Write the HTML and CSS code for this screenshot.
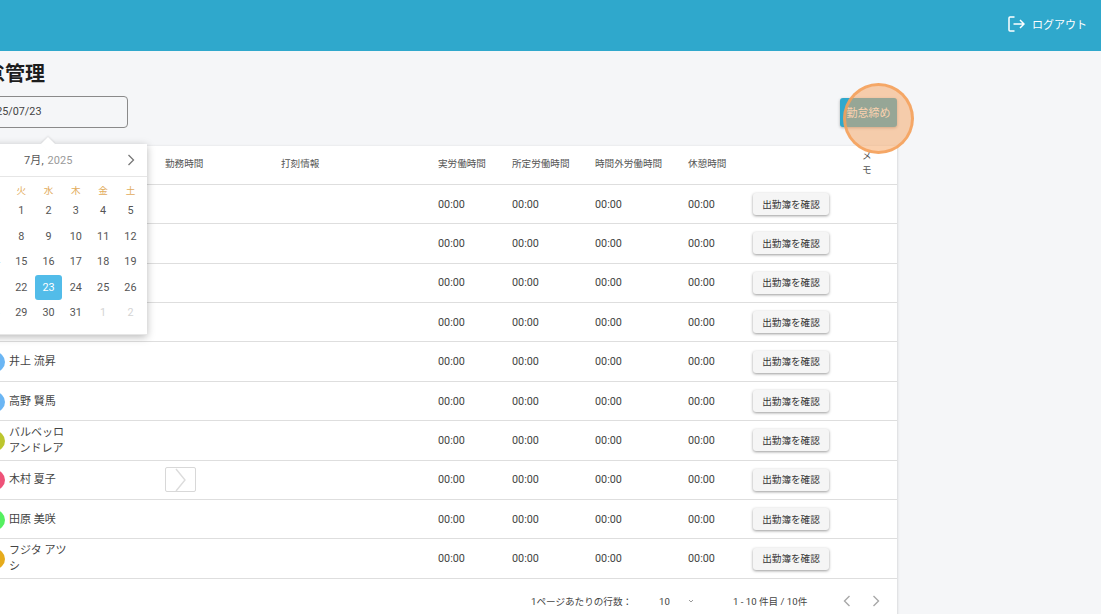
FILE: index.html
```html
<!DOCTYPE html>
<html lang="ja">
<head>
<meta charset="utf-8">
<title>勤怠管理</title>
<link rel="stylesheet" href="styles.css">
</head>
<body>
<header class="topbar">
  <a class="logout">
    <svg class="logout-icon" width="17" height="16" viewBox="0 0 17 16" fill="none" stroke="#fff" stroke-width="1.5"><path d="M6.5 1H2a1 1 0 0 0-1 1v12a1 1 0 0 0 1 1h4.5"/><path d="M5.5 8H16M12 4l4 4-4 4"/></svg>
    <span>ログアウト</span>
  </a>
</header>
<main class="page">
  <h1 class="title">勤怠管理</h1>
  <div class="toolbar">
    <div class="date-input">2025/07/23</div>
    <button class="close-btn">勤怠締め</button>
  </div>
  <div class="table">
    <div class="row head">
      <div class="cell"></div><div class="cell">勤務時間</div><div class="cell">打刻情報</div><div class="cell">実労働時間</div><div class="cell">所定労働時間</div><div class="cell">時間外労働時間</div><div class="cell">休憩時間</div><div class="cell"></div><div class="cell memo">メモ</div>
    </div>
    <div class="row"><div class="cell name"></div><div class="cell"></div><div class="cell"></div><div class="cell">00:00</div><div class="cell">00:00</div><div class="cell">00:00</div><div class="cell">00:00</div><div class="cell"><button class="ledger">出勤簿を確認</button></div><div class="cell"></div></div>
    <div class="row"><div class="cell name"></div><div class="cell"></div><div class="cell"></div><div class="cell">00:00</div><div class="cell">00:00</div><div class="cell">00:00</div><div class="cell">00:00</div><div class="cell"><button class="ledger">出勤簿を確認</button></div><div class="cell"></div></div>
    <div class="row"><div class="cell name"></div><div class="cell"></div><div class="cell"></div><div class="cell">00:00</div><div class="cell">00:00</div><div class="cell">00:00</div><div class="cell">00:00</div><div class="cell"><button class="ledger">出勤簿を確認</button></div><div class="cell"></div></div>
    <div class="row"><div class="cell name"></div><div class="cell"></div><div class="cell"></div><div class="cell">00:00</div><div class="cell">00:00</div><div class="cell">00:00</div><div class="cell">00:00</div><div class="cell"><button class="ledger">出勤簿を確認</button></div><div class="cell"></div></div>
    <div class="row"><div class="cell name"><i class="avatar blue"></i><span class="person">井上 流昇</span></div><div class="cell"></div><div class="cell"></div><div class="cell">00:00</div><div class="cell">00:00</div><div class="cell">00:00</div><div class="cell">00:00</div><div class="cell"><button class="ledger">出勤簿を確認</button></div><div class="cell"></div></div>
    <div class="row"><div class="cell name"><i class="avatar blue"></i><span class="person">高野 賢馬</span></div><div class="cell"></div><div class="cell"></div><div class="cell">00:00</div><div class="cell">00:00</div><div class="cell">00:00</div><div class="cell">00:00</div><div class="cell"><button class="ledger">出勤簿を確認</button></div><div class="cell"></div></div>
    <div class="row"><div class="cell name"><i class="avatar lime"></i><span class="person">バルベッロ アンドレア</span></div><div class="cell"></div><div class="cell"></div><div class="cell">00:00</div><div class="cell">00:00</div><div class="cell">00:00</div><div class="cell">00:00</div><div class="cell"><button class="ledger">出勤簿を確認</button></div><div class="cell"></div></div>
    <div class="row"><div class="cell name"><i class="avatar pink"></i><span class="person">木村 夏子</span></div><div class="cell"><span class="stamp"><svg width="14" height="24" viewBox="0 0 14 24" fill="none" stroke="#dcdcdc" stroke-width="1.4"><path d="M2 1l9 11-9 11"/></svg></span></div><div class="cell"></div><div class="cell">00:00</div><div class="cell">00:00</div><div class="cell">00:00</div><div class="cell">00:00</div><div class="cell"><button class="ledger">出勤簿を確認</button></div><div class="cell"></div></div>
    <div class="row"><div class="cell name"><i class="avatar green"></i><span class="person">田原 美咲</span></div><div class="cell"></div><div class="cell"></div><div class="cell">00:00</div><div class="cell">00:00</div><div class="cell">00:00</div><div class="cell">00:00</div><div class="cell"><button class="ledger">出勤簿を確認</button></div><div class="cell"></div></div>
    <div class="row"><div class="cell name"><i class="avatar amber"></i><span class="person">フジタ アツシ</span></div><div class="cell"></div><div class="cell"></div><div class="cell">00:00</div><div class="cell">00:00</div><div class="cell">00:00</div><div class="cell">00:00</div><div class="cell"><button class="ledger">出勤簿を確認</button></div><div class="cell"></div></div>
    <div class="pager">
      <span class="pager-label">1ページあたりの行数：</span>
      <span class="pager-size">10</span>
      <svg class="pager-caret" width="6" height="4" viewBox="0 0 6 4" fill="none" stroke="#9a9a9a"><path d="M1 1l2 2 2-2"/></svg>
      <span class="pager-range">1 - 10 件目 / 10件</span>
      <svg class="pager-prev" width="8" height="12" viewBox="0 0 8 12" fill="none" stroke="#a8a8a8" stroke-width="1.4"><path d="M6.5 1L1.5 6l5 5"/></svg>
      <svg class="pager-next" width="8" height="12" viewBox="0 0 8 12" fill="none" stroke="#a8a8a8" stroke-width="1.4"><path d="M1.5 1l5 5-5 5"/></svg>
    </div>
  </div>

  <div class="calendar">
    <div class="cal-head">
      <span class="cal-title">7月, <em>2025</em></span>
      <svg class="cal-next" width="8" height="12" viewBox="0 0 8 12" fill="none" stroke="#777" stroke-width="1.3"><path d="M1.5 1l5 5-5 5"/></svg>
    </div>
    <div class="cal-grid weekdays"><span>日</span><span>月</span><span>火</span><span>水</span><span>木</span><span>金</span><span>土</span></div>
    <div class="cal-grid days">
      <span class="off">29</span><span class="off">30</span><span>1</span><span>2</span><span>3</span><span>4</span><span>5</span>
      <span>6</span><span>7</span><span>8</span><span>9</span><span>10</span><span>11</span><span>12</span>
      <span>13</span><span>14</span><span>15</span><span>16</span><span>17</span><span>18</span><span>19</span>
      <span>20</span><span>21</span><span>22</span><span class="selected">23</span><span>24</span><span>25</span><span>26</span>
      <span>27</span><span>28</span><span>29</span><span>30</span><span>31</span><span class="off">1</span><span class="off">2</span>
    </div>
  </div>
</main>
<div class="spotlight"></div>
</body>
</html>
```
FILE: styles.css
```css
* { box-sizing: border-box; }
html, body { margin: 0; height: 614px; overflow: hidden; }
body {
  background: #f5f6f8;
  color: #444;
  font-family: Roboto, "Noto Sans CJK JP", sans-serif;
  font-size: 10.8px;
}
.topbar {
  height: 51px;
  background: #2fa8cc;
  display: flex;
  justify-content: flex-end;
  align-items: center;
  padding: 0 14px 3px 0;
}
.logout { display: flex; align-items: center; gap: 7px; color: #fff; font-size: 11px; }
.page {
  position: relative;
  width: 928px;
  margin-left: -31px;
}
.title {
  margin: 0 0 0 -4px;
  padding-top: 11px;
  height: 45px;
  font-size: 20px;
  line-height: 24px;
  font-weight: 700;
  color: #1d1d1d;
}
.toolbar {
  height: 50px;
  display: flex;
  justify-content: space-between;
  align-items: flex-start;
}
.date-input {
  width: 151px;
  margin-left: 8px;
  height: 32px;
  padding-left: 6px;
  border: 1px solid #8a8a8a;
  border-radius: 4px;
  line-height: 30px;
  font-size: 10.8px;
  color: #444;
}
.close-btn {
  width: 57px;
  height: 29px;
  margin-top: 2px;
  border: 0;
  border-radius: 3px;
  background: #2fa8cc;
  color: #fff;
  font: inherit;
  font-size: 11px;
  padding: 0 0 2px;
  box-shadow: 0 1px 3px rgba(0, 0, 0, .3);
}
.table {
  background: #fff;
  box-shadow: 0 1px 3px rgba(0, 0, 0, .2);
  height: 480px;
}
.row {
  display: grid;
  grid-template-columns: 196px 116px 157px 74px 83px 93px 65px 109px 35px;
  align-items: center;
  height: 39.4px;
  border-bottom: 1px solid #dedede;
}
.head { height: 38.9px; padding-bottom: 3px; font-size: 9.6px; color: #555; }
.memo { width: 11px; line-height: 14px; }
.name { display: flex; align-items: center; gap: 4px; padding: 1px 0 0 16px; font-size: 11px; }
.person { width: 60px; line-height: 16px; }
.avatar { width: 20px; height: 20px; border-radius: 50%; flex: none; }
.blue { background: #6bb6f4; }
.lime { background: #bcc62e; }
.pink { background: #ee5278; }
.green { background: #55f060; }
.amber { background: #e6ab1c; }
.ledger {
  display: block;
  width: 76px;
  height: 22px;
  padding: 0 0 1px;
  border: 0;
  border-radius: 3px;
  background: #f5f5f5;
  color: #333;
  font: inherit;
  font-size: 9.6px;
  box-shadow: 0 1px 3px rgba(0, 0, 0, .4);
}
.stamp {
  width: 31px;
  height: 25px;
  border: 1px solid #d8d8d8;
  border-radius: 2px;
  display: flex;
  align-items: center;
  justify-content: center;
}
.pager {
  height: 45px;
  display: flex;
  align-items: center;
  padding-left: 562px;
  font-size: 9.6px;
  color: #444;
}
.pager-label { width: 128px; }
.pager-size { width: 29px; }
.pager-caret { margin-right: 39px; }
.pager-range { width: 110px; }
.pager-next { margin-left: 21px; }
.calendar {
  position: absolute;
  left: 0;
  top: 93px;
  width: 178px;
  height: 191px;
  background: #fff;
  box-shadow: 0 2px 8px rgba(0, 0, 0, .28);
}
.calendar::before {
  content: "";
  position: absolute;
  left: 74px;
  top: -5px;
  width: 10px;
  height: 10px;
  background: #fff;
  transform: rotate(45deg);
  box-shadow: -1px -1px 2px rgba(0, 0, 0, .08);
}
.cal-head {
  position: relative;
  height: 33px;
  border-bottom: 1px solid #e6e6e6;
}
.cal-title { position: absolute; left: 55px; top: 7px; font-size: 11px; letter-spacing: .1px; color: #555; }
.cal-title em { font-style: normal; color: #9a9a9a; margin-left: 1px; }
.cal-next { position: absolute; right: 12px; top: 10px; }
.cal-grid {
  display: grid;
  grid-template-columns: repeat(7, 27.3px);
  margin-left: -16px;
  text-align: center;
}
.weekdays { height: 21px; padding-top: 7px; font-size: 9.6px; line-height: 14px; color: #e2ac5c; }
.days {
  grid-auto-rows: 25.5px;
  font-size: 10.8px;
  line-height: 25.5px;
  color: #555;
  height: 137px;
  width: 194px;
  border-bottom: 1px solid #e6e6e6;
}
.off { color: #d4d4d4; }
.selected { background: #52bce9; color: #fff; border-radius: 3px; }
.spotlight {
  position: absolute;
  left: 843px;
  top: 83px;
  width: 71px;
  height: 71px;
  border-radius: 50%;
  border: 3px solid rgba(244, 160, 90, .85);
  background: rgba(246, 165, 100, .52);
}
```
